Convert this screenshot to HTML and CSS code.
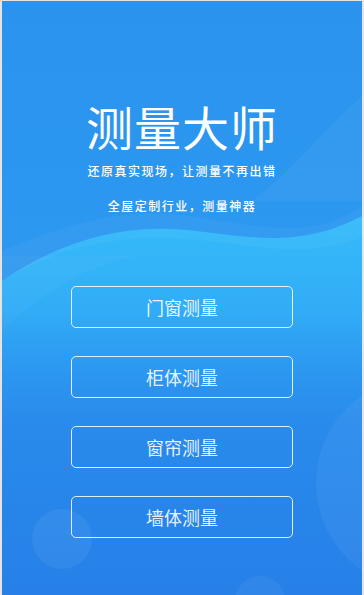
FILE: index.html
```html
<!DOCTYPE html>
<html lang="zh-CN">
<head>
  <meta charset="UTF-8">
  <meta name="viewport" content="width=device-width, initial-scale=1.0">
  <title>测量大师</title>
  <link rel="stylesheet" href="styles.css">
</head>
<body>

<div class="screen">
  <!-- background waves and bubbles -->
  <svg class="backdrop" width="360" height="594" viewBox="0 0 360 594" preserveAspectRatio="none">
    <defs>
      <linearGradient id="base" x1="0" y1="0" x2="0" y2="1">
        <stop offset="0" stop-color="#2B93EE"/>
        <stop offset="0.4" stop-color="#2C98F0"/>
        <stop offset="0.7" stop-color="#298BEC"/>
        <stop offset="1" stop-color="#2680E8"/>
      </linearGradient>
      <linearGradient id="wave" x1="0" y1="0" x2="0" y2="1">
        <stop offset="0" stop-color="#35BCFA"/>
        <stop offset="0.45" stop-color="#33B2F8" stop-opacity="0.8"/>
        <stop offset="1" stop-color="#2C98F0" stop-opacity="0"/>
      </linearGradient>
    </defs>
    <rect width="360" height="594" fill="url(#base)"/>
    <path d="M250 200 C290 170 320 130 360 95 L360 200 Z" fill="#ffffff" fill-opacity="0.04"/>
    <path d="M0 280 C50 245 110 225 170 228 C235 232 290 252 360 215 L360 430 L0 430 Z" fill="url(#wave)"/>
    <path d="M0 250 C60 225 120 205 190 215 C260 226 310 240 360 205 L360 235 C300 262 240 240 180 238 C110 232 50 250 0 280 Z" fill="#ffffff" fill-opacity="0.04"/>
    <path d="M0 330 C40 290 80 270 130 255 L0 255 Z" fill="#ffffff" fill-opacity="0.03"/>
    <circle cx="60" cy="538" r="30" fill="#ffffff" fill-opacity="0.06"/>
    <circle cx="420" cy="482" r="106" fill="#ffffff" fill-opacity="0.05"/>
    <circle cx="258" cy="600" r="25" fill="#ffffff" fill-opacity="0.05"/>
  </svg>

  <div class="content">
    <h1 class="title">测量大师</h1>
    <p class="slogan">还原真实现场，让测量不再出错</p>
    <p class="slogan slogan-sub">全屋定制行业，测量神器</p>

    <div class="menu">
      <a class="menu-btn" href="#">门窗测量</a>
      <a class="menu-btn" href="#">柜体测量</a>
      <a class="menu-btn" href="#">窗帘测量</a>
      <a class="menu-btn" href="#">墙体测量</a>
    </div>
  </div>
</div>

</body>
</html>
```

FILE: styles.css
```css
html, body {
  margin: 0;
  padding: 0;
  background: #ffffff;
}

body {
  font-family: "Noto Sans CJK SC", "Noto Sans", sans-serif;
  color: white;
}

.screen {
  position: relative;
  width: 360px;
  height: 594px;
  border: 2px solid #e4e4e4;
  border-top-width: 1px;
  border-bottom: none;
  overflow: hidden;
}

.backdrop {
  position: absolute;
  top: 0;
  left: 0;
}

.content {
  position: relative;
  display: flex;
  flex-direction: column;
  align-items: center;
  padding-top: 93px;
}

.title {
  margin: 0;
  font-size: 47px;
  font-weight: 400;
  line-height: 64px;
  letter-spacing: 1px;
}

.slogan {
  margin: 3px 0 0;
  font-size: 12px;
  line-height: 20px;
  letter-spacing: 1.5px;
  font-weight: 500;
}

.slogan-sub {
  margin-top: 15px;
}

.menu {
  display: flex;
  flex-direction: column;
  gap: 28px;
  margin-top: 70px;
}

.menu-btn {
  box-sizing: border-box;
  display: flex;
  align-items: center;
  justify-content: center;
  width: 222px;
  height: 42px;
  border: 1.5px solid rgba(255, 255, 255, 0.85);
  border-radius: 5px;
  color: rgba(255, 255, 255, 0.9);
  font-size: 18px;
  text-decoration: none;
}
```
